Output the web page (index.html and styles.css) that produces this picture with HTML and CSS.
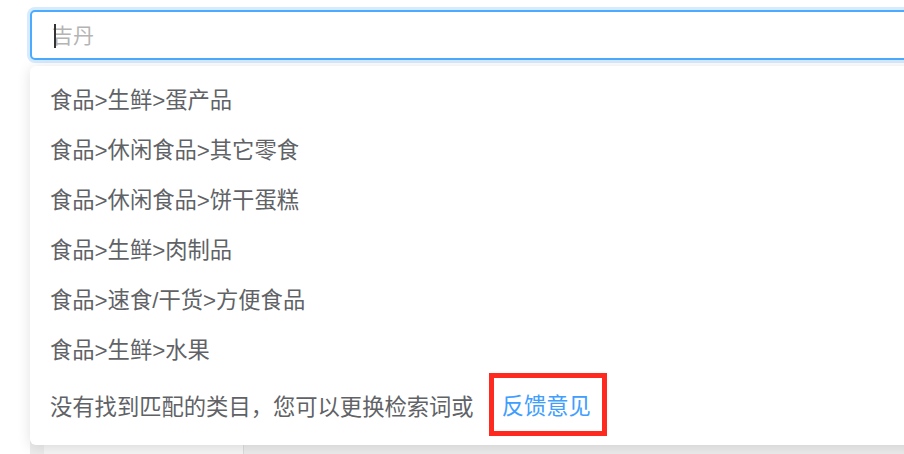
FILE: index.html
```
<!DOCTYPE html>
<html lang="zh-CN">
<head>
    <meta charset="UTF-8">
    <meta name="viewport" content="width=device-width, initial-scale=1.0">
    <title>类目搜索</title>
    <link rel="stylesheet" href="styles.css">
</head>
<body>
    <div class="page">
        <div class="search">
            <input type="text" class="search-input" placeholder="吉丹">
            <span class="caret"></span>
            <div class="dropdown">
                <ul class="suggestions">
                    <li>食品&gt;生鲜&gt;蛋产品</li>
                    <li>食品&gt;休闲食品&gt;其它零食</li>
                    <li>食品&gt;休闲食品&gt;饼干蛋糕</li>
                    <li>食品&gt;生鲜&gt;肉制品</li>
                    <li>食品&gt;速食/干货&gt;方便食品</li>
                    <li>食品&gt;生鲜&gt;水果</li>
                </ul>
                <div class="empty-tip">
                    <span>没有找到匹配的类目，您可以更换检索词或</span>
                    <a href="#" class="feedback">反馈意见</a>
                </div>
            </div>
        </div>
        <div class="content">
            <aside class="sidebar"></aside>
        </div>
    </div>
</body>
</html>
```

FILE: styles.css
```
* {
    margin: 0;
    padding: 0;
    box-sizing: border-box;
    font-family: "Liberation Sans", "Noto Sans CJK SC", sans-serif;
}
body {
    background-color: #fff;
    overflow: hidden;
    width: 904px;
    height: 454px;
}
.page {
    padding: 10px 0 0 30px;
}
.search {
    position: relative;
    z-index: 2;
}
.search-input {
    display: block;
    width: 900px;
    height: 50px;
    padding: 2px 20px 0;
    font-size: 21px;
    color: #606266;
    border: 2px solid #4aabff;
    border-radius: 5px;
    outline: none;
    box-shadow: 0 0 0 3px #d6ebff;
}
.search-input::placeholder {
    color: #b4b4b4;
}
/* blinking caret captured in the screenshot */
.caret {
    position: absolute;
    top: 14px;
    left: 24px;
    width: 2px;
    height: 24px;
    background-color: #333;
}
.dropdown {
    position: absolute;
    top: 56px;
    left: 0;
    width: 900px;
    height: 379px;
    padding-top: 10px;
    background-color: #fff;
    border-radius: 6px;
    box-shadow: 0 2px 14px rgba(0, 0, 0, 0.12);
}
.suggestions {
    list-style: none;
}
.suggestions li {
    height: 50px;
    line-height: 50px;
    padding-left: 20px;
    font-size: 22.3px;
    color: #606266;
}
.empty-tip {
    display: flex;
    align-items: center;
    margin-top: -3px;
    padding-left: 20px;
    font-size: 22.3px;
    color: #606266;
}
.empty-tip span {
    margin-right: 15px;
}
.feedback {
    display: inline-block;
    padding: 4px 11px 0 8px;
    line-height: 49px;
    color: #409eff;
    text-decoration: none;
    border: 5px solid #ff2a1f;
}
.content {
    height: 400px;
    margin-top: 20px;
    background-color: #ececec;
}
.sidebar {
    display: block;
    width: 200px;
    height: 100%;
    margin-left: 14px;
    background-color: #f6f6f6;
    border-right: 1px solid #dcdcdc;
}
```
